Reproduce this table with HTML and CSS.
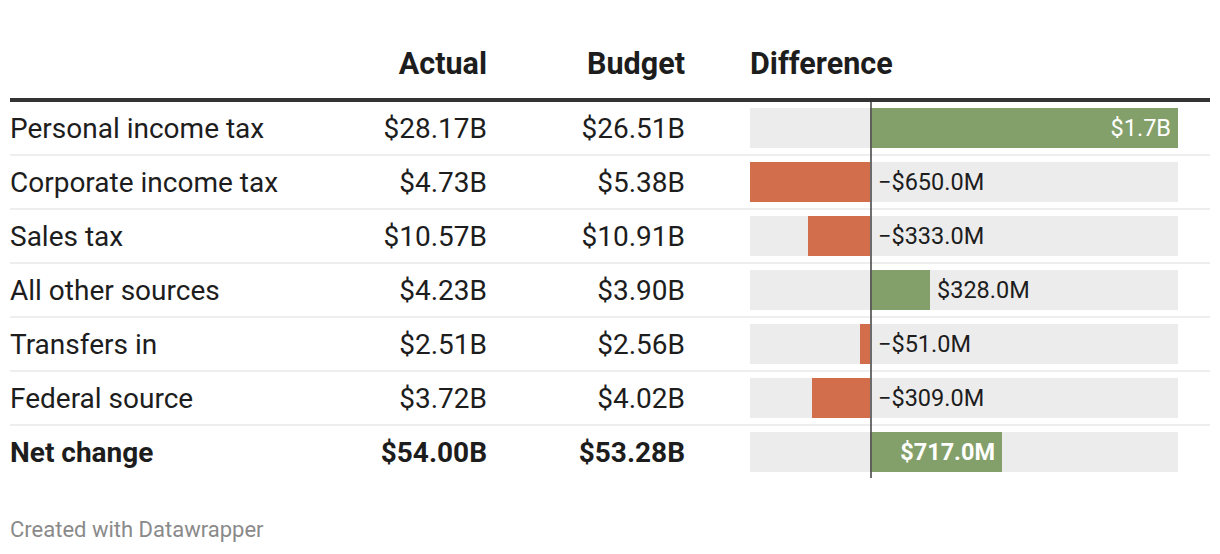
FILE: index.html
```html
<!DOCTYPE html>
<html>
<head>
<meta charset="utf-8">
<link rel="stylesheet" href="styles.css">
</head>
<body>
<div class="chart">
  <div class="row head">
    <div class="c-label"></div>
    <div class="c-num">Actual</div>
    <div class="c-num">Budget</div>
    <div class="c-diff">Difference</div>
  </div>
  <div class="row">
    <div class="c-label">Personal income tax</div>
    <div class="c-num">$28.17B</div>
    <div class="c-num">$26.51B</div>
    <div class="c-diff"><div class="track"><div class="bar pos in" style="left:120px;width:308px"><span class="val">$1.7B</span></div><div class="zero"></div></div></div>
  </div>
  <div class="row">
    <div class="c-label">Corporate income tax</div>
    <div class="c-num">$4.73B</div>
    <div class="c-num">$5.38B</div>
    <div class="c-diff"><div class="track"><div class="bar neg" style="left:0px;width:120px"><span class="val">−$650.0M</span></div><div class="zero"></div></div></div>
  </div>
  <div class="row">
    <div class="c-label">Sales tax</div>
    <div class="c-num">$10.57B</div>
    <div class="c-num">$10.91B</div>
    <div class="c-diff"><div class="track"><div class="bar neg" style="left:58px;width:62px"><span class="val">−$333.0M</span></div><div class="zero"></div></div></div>
  </div>
  <div class="row">
    <div class="c-label">All other sources</div>
    <div class="c-num">$4.23B</div>
    <div class="c-num">$3.90B</div>
    <div class="c-diff"><div class="track"><div class="bar pos out" style="left:120px;width:60px"><span class="val">$328.0M</span></div><div class="zero"></div></div></div>
  </div>
  <div class="row">
    <div class="c-label">Transfers in</div>
    <div class="c-num">$2.51B</div>
    <div class="c-num">$2.56B</div>
    <div class="c-diff"><div class="track"><div class="bar neg" style="left:110px;width:10px"><span class="val">−$51.0M</span></div><div class="zero"></div></div></div>
  </div>
  <div class="row">
    <div class="c-label">Federal source</div>
    <div class="c-num">$3.72B</div>
    <div class="c-num">$4.02B</div>
    <div class="c-diff"><div class="track"><div class="bar neg" style="left:62px;width:58px"><span class="val">−$309.0M</span></div><div class="zero"></div></div></div>
  </div>
  <div class="row total">
    <div class="c-label">Net change</div>
    <div class="c-num">$54.00B</div>
    <div class="c-num">$53.28B</div>
    <div class="c-diff"><div class="track"><div class="bar pos in" style="left:120px;width:132px"><span class="val">$717.0M</span></div><div class="zero"></div></div></div>
  </div>
  <div class="footer">Created with Datawrapper</div>
</div>
</body>
</html>
```
FILE: styles.css
```css
html, body {
  margin: 0;
  padding: 0;
  background: #ffffff;
}
body {
  font-family: Roboto, "Liberation Sans", sans-serif;
  color: #1d1d1d;
}
.chart {
  padding: 0 10px;
}
.row {
  display: grid;
  grid-template-columns: 290px 187px 198px 525px;
  height: 52px;
  align-items: center;
  font-size: 28px;
  line-height: 33px;
  border-bottom: 2px solid #eeeeee;
}
.row.head {
  height: auto;
  align-items: end;
  padding-top: 46px;
  padding-bottom: 16px;
  font-size: 30.5px;
  line-height: 36px;
  font-weight: 700;
  border-bottom: 4px solid #333333;
}
.row.total {
  font-weight: 700;
  border-bottom: none;
}
.c-num {
  text-align: right;
}
.c-diff {
  padding-left: 65px;
  height: 100%;
  display: flex;
  align-items: center;
}
.row.head .c-diff {
  height: auto;
}
.track {
  position: relative;
  width: 428px;
  height: 40px;
  background: #ececec;
}
.zero {
  position: absolute;
  left: 120px;
  width: 2px;
  top: -6px;
  bottom: -8px;
  background: #555555;
  opacity: 0.85;
}
.row.total .zero {
  bottom: -6px;
}
.bar {
  position: absolute;
  top: 0;
  height: 40px;
}
.bar.pos {
  background: #84a06a;
}
.bar.neg {
  background: #d36e4c;
}
.val {
  position: absolute;
  top: 0;
  line-height: 40px;
  font-size: 23.5px;
  white-space: nowrap;
  color: #1d1d1d;
  font-weight: 400;
}
.bar.in .val {
  right: 7px;
  color: #ffffff;
}
.row.total .val {
  font-weight: 700;
}
.bar.out .val {
  left: calc(100% + 7px);
}
.bar.neg .val {
  left: calc(100% + 8px);
}
.footer {
  margin-top: 39px;
  font-size: 22px;
  line-height: 26px;
  color: #8a8a8a;
}
```
